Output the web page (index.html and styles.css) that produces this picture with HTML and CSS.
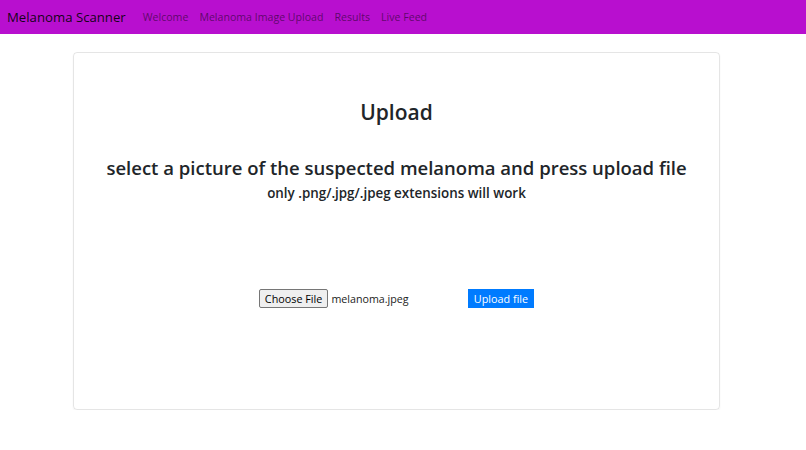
FILE: index.html
```html
<!DOCTYPE html>
<html>
<head>
<meta charset="utf-8">
<link rel="stylesheet" href="styles.css">
</head>
<body>
<nav class="navbar">
  <span class="brand">Melanoma Scanner</span>
  <a class="nav-link">Welcome</a>
  <a class="nav-link">Melanoma Image Upload</a>
  <a class="nav-link">Results</a>
  <a class="nav-link">Live Feed</a>
</nav>
<main class="card">
  <h1 class="title">Upload</h1>
  <h2 class="lead">select a picture of the suspected melanoma and press upload file</h2>
  <h3 class="note">only .png/.jpg/.jpeg extensions will work</h3>
  <form class="upload-form">
    <div class="file-input">
      <span class="choose-btn">Choose File</span>
      <span class="file-name">melanoma.jpeg</span>
    </div>
    <span class="upload-btn">Upload file</span>
  </form>
</main>
</body>
</html>
```
FILE: styles.css
```css
html, body {
  margin: 0;
  padding: 0;
  background: #fff;
  font-family: "Open Sans", "Noto Sans", sans-serif;
  color: #212529;
}
.navbar {
  height: 34px;
  background: #b80fcf;
  display: flex;
  align-items: center;
  padding: 0 7px 1px;
  box-sizing: border-box;
}
.brand {
  font-size: 13.2px;
  color: rgba(0,0,0,0.9);
  margin-right: 17px;
}
.nav-link {
  font-size: 10.6px;
  color: rgba(0,0,0,0.5);
  margin-right: 11px;
}
.card {
  margin: 18px 0 0 73px;
  width: 647px;
  height: 358px;
  box-sizing: border-box;
  border: 1px solid rgba(0,0,0,0.1);
  border-radius: 4px;
  box-shadow: 0 1px 2px rgba(0,0,0,0.05);
  display: flex;
  flex-direction: column;
  align-items: center;
}
.title {
  margin: 46px 0 0;
  font-size: 21px;
  font-weight: 600;
  line-height: 26px;
}
.lead {
  margin: 31px 0 0;
  font-size: 18.5px;
  font-weight: 600;
  line-height: 24px;
}
.note {
  margin: 4px 0 0;
  font-size: 13.4px;
  font-weight: 600;
  line-height: 18px;
}
.upload-form {
  margin-top: 87px;
  display: flex;
  align-items: center;
}
.file-input {
  display: flex;
  align-items: center;
  width: 209px;
}
.choose-btn {
  font-size: 10.8px;
  height: 19px;
  line-height: 17px;
  padding: 0 5px;
  box-sizing: border-box;
  border: 1px solid #767676;
  border-radius: 2px;
  background: #efefef;
  color: #000;
}
.file-name {
  font-size: 10.7px;
  margin-left: 3px;
  color: #222;
}
.upload-btn {
  font-size: 10.8px;
  height: 19px;
  line-height: 19px;
  padding: 0 6px;
  background: #007bff;
  color: #fff;
}
```
